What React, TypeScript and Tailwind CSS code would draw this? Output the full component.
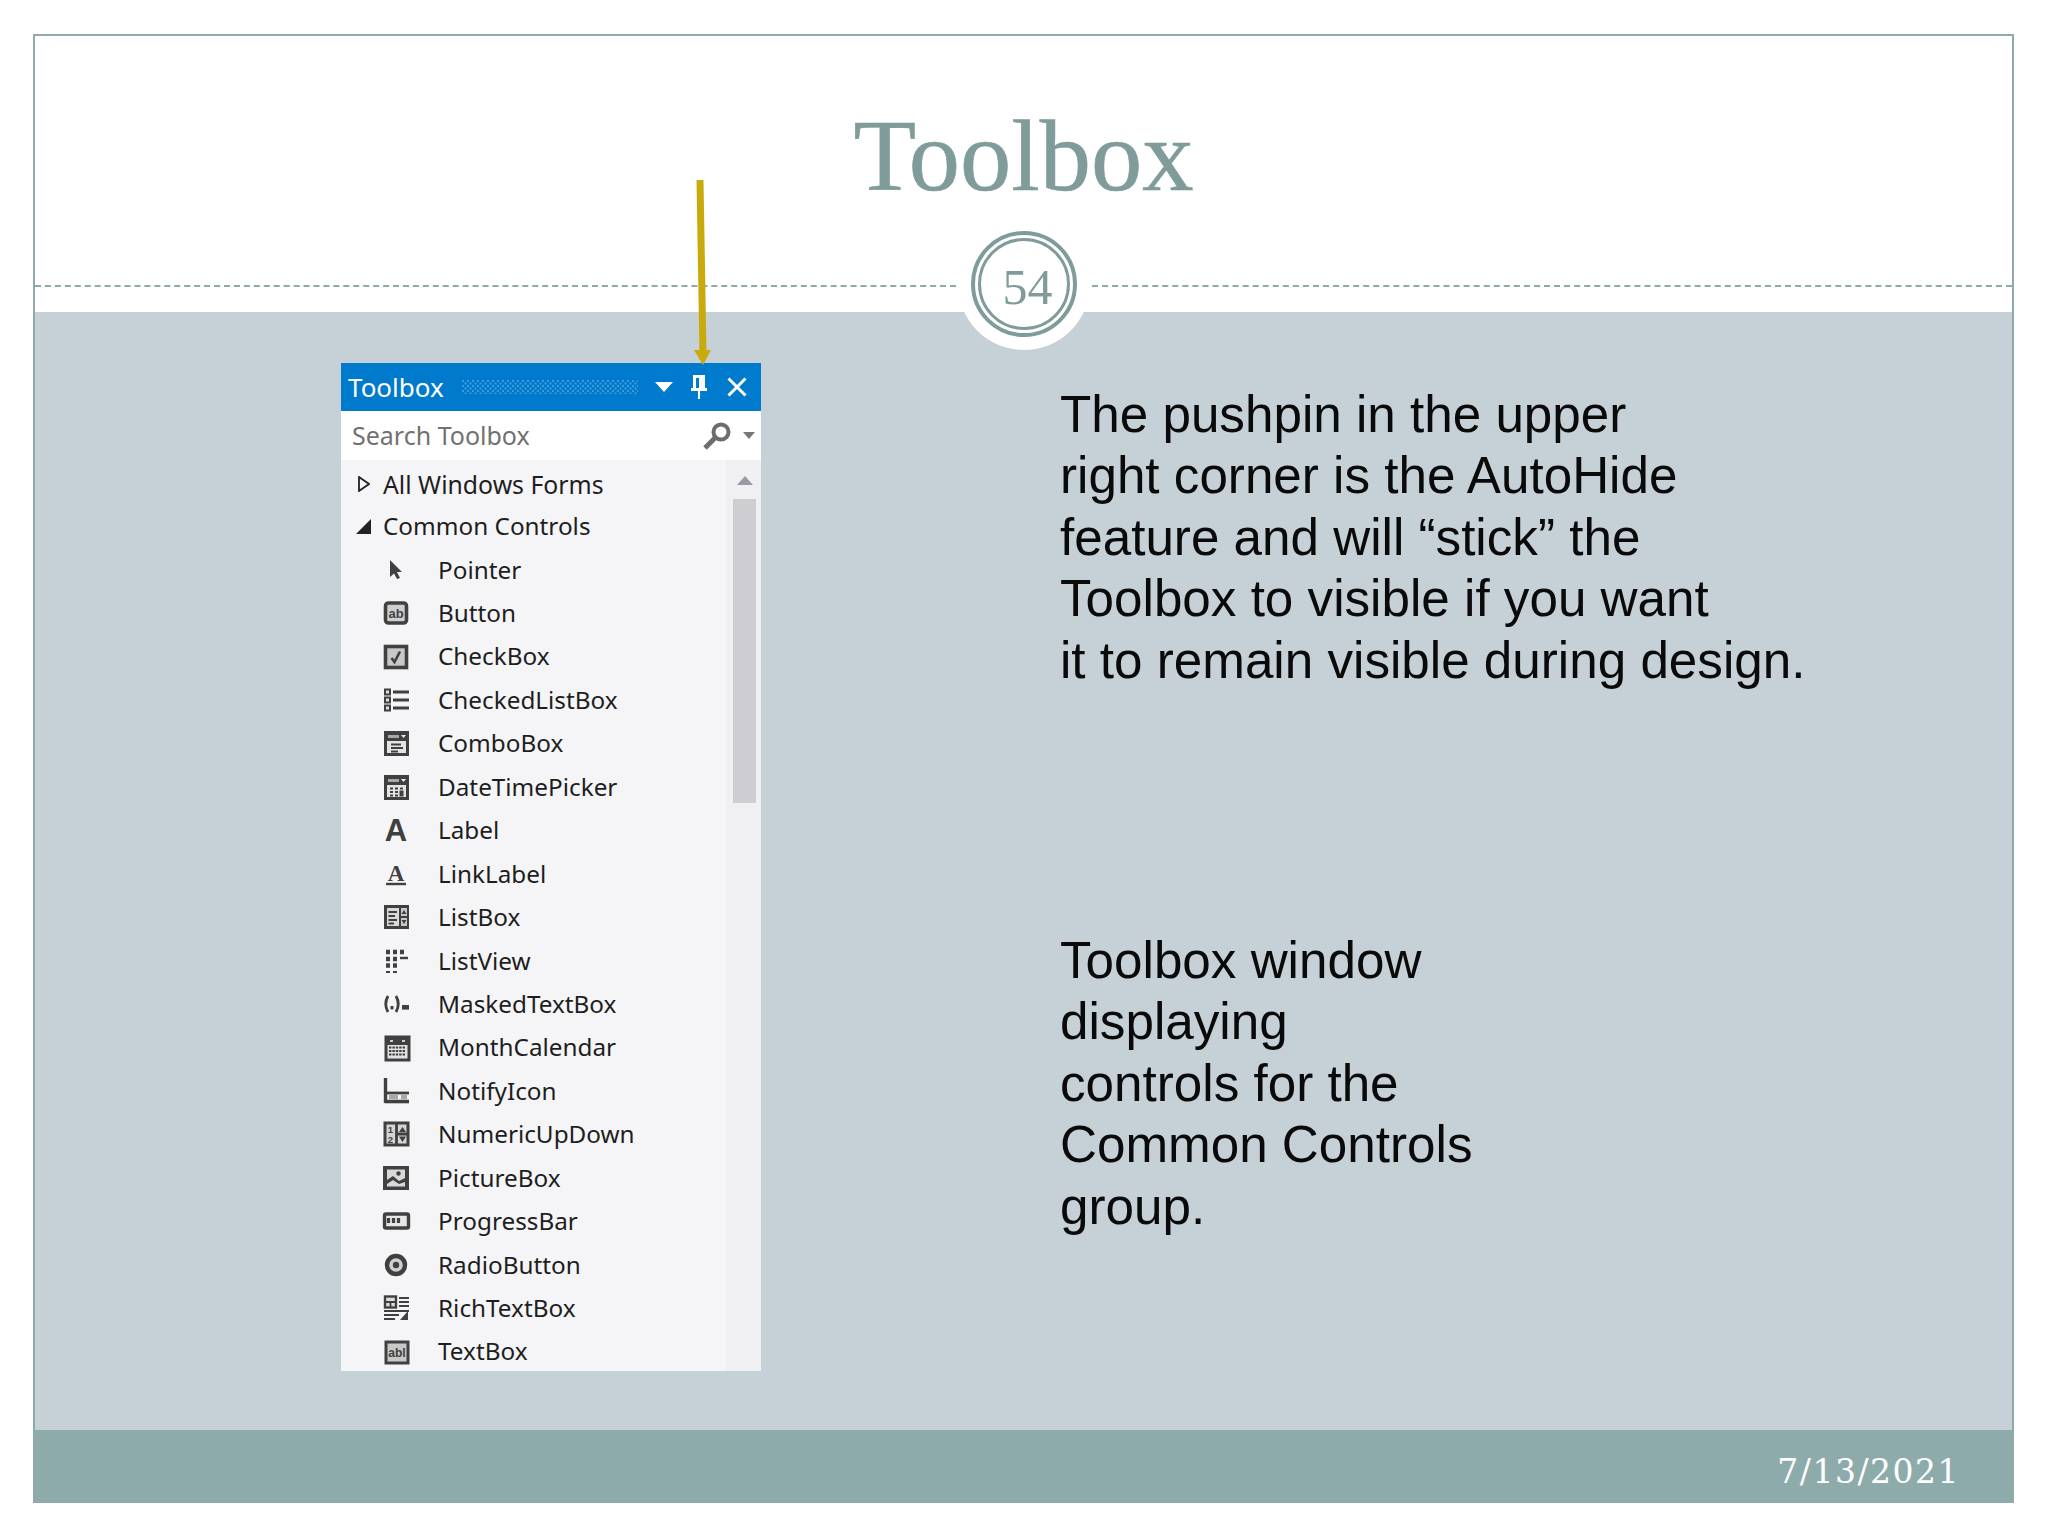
const FONT_UI = "font-['Noto_Sans',sans-serif]";

function IconFrame({ children }: { children: React.ReactNode }) {
  return (
    <svg width="26" height="26" viewBox="0 0 26 26" fill="none" className="shrink-0 overflow-visible">
      {children}
    </svg>
  );
}

const DARK = "#404040";

const icons: Record<string, React.ReactNode> = {
  Pointer: <path d="M7 3 L7 20 L11 16.5 L14 22 L17 21 L14 15 L19 15 Z" fill={DARK} />,
  Button: (
    <>
      <rect x="2.5" y="3" width="21" height="20" rx="3" fill="#cfcfcf" stroke={DARK} strokeWidth="3.6" />
      <text x="13" y="18" textAnchor="middle" fontSize="13" fontFamily="Liberation Sans" fontWeight="700" fill={DARK}>ab</text>
    </>
  ),
  CheckBox: (
    <>
      <rect x="2.5" y="2.5" width="21" height="21" fill="#c8c8c8" stroke={DARK} strokeWidth="3.6" />
      <path d="M8.5 14 L11.5 18 L17 7.5" stroke={DARK} strokeWidth="2.6" />
    </>
  ),
  CheckedListBox: (
    <>
      <rect x="2" y="2.5" width="5" height="5" fill="#ddd" stroke={DARK} strokeWidth="2" />
      <rect x="2" y="10.5" width="5" height="5" fill="#ddd" stroke={DARK} strokeWidth="2" />
      <rect x="2" y="18.5" width="5" height="5" fill="#ddd" stroke={DARK} strokeWidth="2" />
      <path d="M10 5 H26 M10 13 H26 M10 21 H26" stroke={DARK} strokeWidth="3.2" />
    </>
  ),
  ComboBox: (
    <>
      <rect x="2.5" y="2.5" width="22" height="22" fill="#e4e4e4" stroke={DARK} strokeWidth="3" />
      <rect x="2" y="2" width="23" height="9" fill={DARK} />
      <rect x="5" y="5" width="11" height="3" fill="#a8a8a8" />
      <path d="M18 5 H23 L20.5 8 Z" fill="#eee" />
      <path d="M8 14.5 H18 M8 18 H20 M8 21.5 H15" stroke={DARK} strokeWidth="2" />
    </>
  ),
  DateTimePicker: (
    <>
      <rect x="2.5" y="2.5" width="22" height="22" fill="#e4e4e4" stroke={DARK} strokeWidth="3" />
      <rect x="2" y="2" width="23" height="9" fill={DARK} />
      <rect x="5" y="5" width="11" height="3" fill="#a8a8a8" />
      <path d="M18 5 H23 L20.5 8 Z" fill="#eee" />
      <path d="M7 14.5 H10 M12 14.5 H15 M17 14.5 H20 M7 18 H10 M12 18 H15 M7 21.5 H10 M12 21.5 H15" stroke={DARK} strokeWidth="2.2" />
      <rect x="16.5" y="16.5" width="4" height="6" fill={DARK} />
    </>
  ),
  Label: (
    <text x="13" y="24" textAnchor="middle" fontSize="31" fontFamily="Liberation Sans" fontWeight="700" fill={DARK}>A</text>
  ),
  LinkLabel: (
    <>
      <text x="13" y="20" textAnchor="middle" fontSize="23" fontFamily="Liberation Serif" fontWeight="700" fill={DARK}>A</text>
      <path d="M3 23 H23" stroke={DARK} strokeWidth="2.4" />
    </>
  ),
  ListBox: (
    <>
      <rect x="1" y="1" width="25" height="24" fill={DARK} />
      <rect x="4" y="4" width="12" height="18" fill="#d8d8d8" />
      <path d="M5.5 8 H14 M5.5 12 H12 M5.5 16 H14 M5.5 19.5 H11" stroke={DARK} strokeWidth="2" />
      <rect x="18" y="4" width="6" height="8" fill="#c8c8c8" />
      <rect x="18" y="14" width="6" height="8" fill="#c8c8c8" />
      <path d="M18.5 10 L21 6 L23.5 10 Z M18.5 16 L21 20 L23.5 16 Z" fill={DARK} />
    </>
  ),
  ListView: (
    <>
      <path d="M3 4 H7 M10 4 H14 M17 4 H21 " stroke={DARK} strokeWidth="4.4" />
      <path d="M3 11 H7 M10 11 H14" stroke={DARK} strokeWidth="4.4" />
      <path d="M17 10 H25" stroke={DARK} strokeWidth="2.4" />
      <path d="M3 17.5 H7 M10 17.5 H14" stroke={DARK} strokeWidth="4.4" />
      <path d="M3 24 H7 M10 24 H14" stroke={DARK} strokeWidth="2.2" />
    </>
  ),
  MaskedTextBox: (
    <>
      <path d="M5 5 Q0.5 13 5 21 M13 5 Q17.5 13 13 21" stroke={DARK} strokeWidth="2.8" />
      <rect x="7.5" y="15" width="3" height="3.4" fill={DARK} />
      <rect x="19" y="14" width="7" height="4.6" fill={DARK} />
    </>
  ),
  MonthCalendar: (
    <>
      <rect x="3" y="2" width="23" height="23" fill="#e2e2e2" stroke={DARK} strokeWidth="3" />
      <rect x="3" y="2" width="23" height="8" fill={DARK} />
      <path d="M7 6 H10 M19 6 H22" stroke="#ccc" strokeWidth="2" />
      <path d="M6 12.5 H23 M6 16 H23 M6 19.5 H23" stroke={DARK} strokeWidth="2.2" strokeDasharray="2.4 1" />
    </>
  ),
  NotifyIcon: (
    <>
      <path d="M2.5 0 V25" stroke={DARK} strokeWidth="3.4" />
      <path d="M2 15 H26" stroke={DARK} strokeWidth="2.8" />
      <path d="M2 23.5 H26" stroke={DARK} strokeWidth="3.6" />
      <rect x="6" y="17" width="9" height="4" fill="#a8a8a8" />
      <rect x="18" y="17" width="6" height="4" fill="#a8a8a8" />
    </>
  ),
  NumericUpDown: (
    <>
      <rect x="2" y="2" width="23" height="22" fill="#d4d4d4" stroke={DARK} strokeWidth="3" />
      <path d="M13.5 2 V24 M13.5 13 H25" stroke={DARK} strokeWidth="2.8" />
      <text x="7.5" y="12" textAnchor="middle" fontSize="9.5" fontFamily="Liberation Sans" fontWeight="700" fill={DARK}>1</text>
      <text x="7.5" y="21.5" textAnchor="middle" fontSize="9.5" fontFamily="Liberation Sans" fontWeight="700" fill={DARK}>2</text>
      <path d="M16 11 L19.5 6 L23 11 Z M16 15.5 H23 L19.5 21 Z" fill={DARK} />
    </>
  ),
  PictureBox: (
    <>
      <rect x="0" y="1" width="26" height="24" fill={DARK} />
      <rect x="4" y="4.5" width="18" height="17" fill="#d8d8d8" />
      <path d="M4 15 L10 11 L16 16 L22 13 V17 L16 19 L10 15 L4 19 Z" fill={DARK} />
      <circle cx="15.5" cy="8.5" r="2.2" fill={DARK} />
    </>
  ),
  ProgressBar: (
    <>
      <rect x="1.5" y="6" width="24" height="14" rx="1.5" fill="#e6e6e6" stroke={DARK} strokeWidth="3.4" />
      <path d="M5.5 10 V15 M10.5 10 V15 M15.5 10 V15" stroke={DARK} strokeWidth="3.2" />
    </>
  ),
  RadioButton: (
    <>
      <circle cx="13" cy="13" r="9" stroke={DARK} strokeWidth="4.4" fill="#cfcfcf" />
      <circle cx="13" cy="13" r="3.2" fill={DARK} />
    </>
  ),
  RichTextBox: (
    <>
      <rect x="2" y="1.5" width="11" height="11" stroke={DARK} strokeWidth="2.4" fill="#ddd" />
      <path d="M2 7 H13 M7.5 7 V12" stroke={DARK} strokeWidth="1.8" />
      <path d="M16 3 H26 M16 7 H26 M16 11 H26" stroke={DARK} strokeWidth="2" />
      <path d="M1 16 H26 M1 20 H16 M1 24 H12" stroke={DARK} strokeWidth="2.2" />
      <path d="M17 25 L25 16 V25 Z" fill={DARK} />
    </>
  ),
  TextBox: (
    <>
      <rect x="3" y="3" width="22" height="21" fill="#c8c8c8" stroke={DARK} strokeWidth="3" />
      <text x="14" y="18" textAnchor="middle" fontSize="12" fontFamily="Liberation Sans" fontWeight="700" fill={DARK}>abl</text>
    </>
  ),
};

const controls = Object.keys(icons);

function ToolboxPanel() {
  return (
    <div className={`w-[420px] h-[1008px] flex flex-col shrink-0 overflow-hidden ${FONT_UI}`}>
      <div className="h-[48px] bg-[#007acc] flex items-center pl-[7px] text-white">
        <span className="text-[26px] leading-none w-[114px] whitespace-nowrap">Toolbox</span>
        <svg width="176" height="14" className="shrink-0">
          <defs>
            <pattern id="grip" width="5" height="5" patternUnits="userSpaceOnUse">
              <rect x="0" y="0" width="2" height="2" fill="#3b9bd8" />
              <rect x="2.5" y="2.5" width="2" height="2" fill="#3b9bd8" />
            </pattern>
          </defs>
          <rect width="176" height="14" fill="url(#grip)" />
        </svg>
        <svg width="18" height="10" viewBox="0 0 18 10" className="ml-[17px] shrink-0">
          <path d="M0 0 H18 L9 10 Z" fill="#fff" />
        </svg>
        <svg width="18" height="26" viewBox="0 0 18 26" className="ml-[17px] shrink-0">
          <path d="M3 1 H15 V14 H17 V17 H10 V25 H8 V17 H1 V14 H3 Z M6 4 V14 H9 V4 Z" fill="#fff" fillRule="evenodd" />
        </svg>
        <svg width="20" height="20" viewBox="0 0 20 20" className="ml-[19px] shrink-0">
          <path d="M1.5 1.5 L18.5 18.5 M18.5 1.5 L1.5 18.5" stroke="#fff" strokeWidth="3" />
        </svg>
      </div>
      <div className="h-[49px] bg-white flex items-center pl-[11px] pr-[6px]">
        <span className="text-[25px] leading-none text-[#717171] flex-1 whitespace-nowrap">Search Toolbox</span>
        <svg width="30" height="28" viewBox="0 0 30 28" className="shrink-0">
          <circle cx="19" cy="10" r="7.5" fill="none" stroke="#6d6d6d" strokeWidth="4" />
          <path d="M13 16 L3 26" stroke="#6d6d6d" strokeWidth="5" />
        </svg>
        <svg width="12" height="7" viewBox="0 0 12 7" className="ml-[11px] shrink-0">
          <path d="M0 0 H12 L6 7 Z" fill="#777" />
        </svg>
      </div>
      <div className="flex-1 flex bg-[#f5f5f7] min-h-0">
        <div className="flex-1 pt-[3px] text-[#1e1e1e] text-[24.3px]">
          <div className="h-[42px] flex items-center pl-[17px]">
            <svg width="12" height="16" viewBox="0 0 12 16" className="shrink-0">
              <path d="M1 1 L11 8 L1 15 Z" fill="none" stroke="#222" strokeWidth="1.8" />
            </svg>
            <span className="ml-[13px] text-[24.8px] leading-none whitespace-nowrap">All Windows Forms</span>
          </div>
          <div className="h-[43px] flex items-center pl-[15px]">
            <svg width="15" height="15" viewBox="0 0 15 15" className="shrink-0">
              <path d="M15 0 V15 H0 Z" fill="#222" />
            </svg>
            <span className="ml-[12px] leading-none whitespace-nowrap">Common Controls</span>
          </div>
          {controls.map((name) => (
            <div key={name} className="h-[43.44px] flex items-center pl-[42px]">
              <IconFrame>{icons[name]}</IconFrame>
              <span className="ml-[29px] leading-none whitespace-nowrap">{name}</span>
            </div>
          ))}
        </div>
        <div className="w-[35px] bg-[#f0f0f3] flex flex-col items-center shrink-0 pt-[16px] pl-[2px]">
          <svg width="16" height="9" viewBox="0 0 16 9" className="shrink-0">
            <path d="M8 0 L16 9 H0 Z" fill="#9a9aa5" />
          </svg>
          <div className="w-[23px] h-[304px] mt-[14px] bg-[#cdcdd2]" />
        </div>
      </div>
    </div>
  );
}

export default function App() {
  return (
    <div className="w-[2048px] h-[1536px] bg-white pt-[34px] pl-[33px]">
      <div className="w-[1981px] h-[1469px] border-2 border-[#8eaaaa] flex flex-col relative">
        {/* 矢印 */}
        <svg width="24" height="190" viewBox="0 0 24 190" className="absolute left-[655px] top-[142px] z-20">
          <path d="M10 2 L13 176" stroke="#c9aa0c" strokeWidth="7" />
          <path d="M4 172 H21 L13 187 Z" fill="#c9aa0c" />
        </svg>
        <div className="h-[250px] flex justify-center pt-[65px] bg-white">
          <h1 className="font-['Liberation_Serif',serif] text-[102.5px] leading-[110px] text-[#7f9c9b] [-webkit-text-stroke:0.6px_#7f9c9b]">Toolbox</h1>
        </div>
        <div className="h-0 flex items-center z-10">
          <div className="flex-1 border-t-2 border-dashed border-[#8eaaaa]" />
          <div className="w-[136px] h-0 flex items-center justify-center shrink-0">
            <div className="w-[132px] h-[132px] shrink-0 rounded-full bg-white flex items-center justify-center -mt-[5px]">
              <div className="w-[106px] h-[106px] rounded-full border-[4px] border-[#7f9c9b] p-[3px]">
                <div className="w-full h-full rounded-full border-[3px] border-[#7f9c9b] flex items-center justify-center pl-[8px] pt-[7px] font-['Liberation_Serif',serif] text-[50px] leading-none text-[#7f9c9b]">
                  54
                </div>
              </div>
            </div>
          </div>
          <div className="flex-1 border-t-2 border-dashed border-[#8eaaaa]" />
        </div>
        <div className="h-[26px] bg-white" />
        <div className="flex-1 bg-[#c5d1d7] flex items-start min-h-0">
          <div className="ml-[306px] mt-[51px]">
            <ToolboxPanel />
          </div>
          <div className="ml-[299px] mt-[72px] font-['Liberation_Sans',Arial,sans-serif] text-[51.2px] leading-[61.4px] text-[#0a0a0a]">
            <p>
              The pushpin in the upper
              <br />
              right corner is the AutoHide
              <br />
              feature and will “stick” the
              <br />
              Toolbox to visible if you want
              <br />
              it to remain visible during design.
            </p>
            <p className="mt-[239px]">
              Toolbox window
              <br />
              displaying
              <br />
              controls for the
              <br />
              Common Controls
              <br />
              group.
            </p>
          </div>
        </div>
        <div className="h-[71px] bg-[#8eabab] flex items-center justify-end pr-[52px] pt-[13px] font-['DejaVu_Serif',serif] text-[33px] tracking-[1.5px] text-white">
          7/13/2021
        </div>
      </div>
    </div>
  );
}
